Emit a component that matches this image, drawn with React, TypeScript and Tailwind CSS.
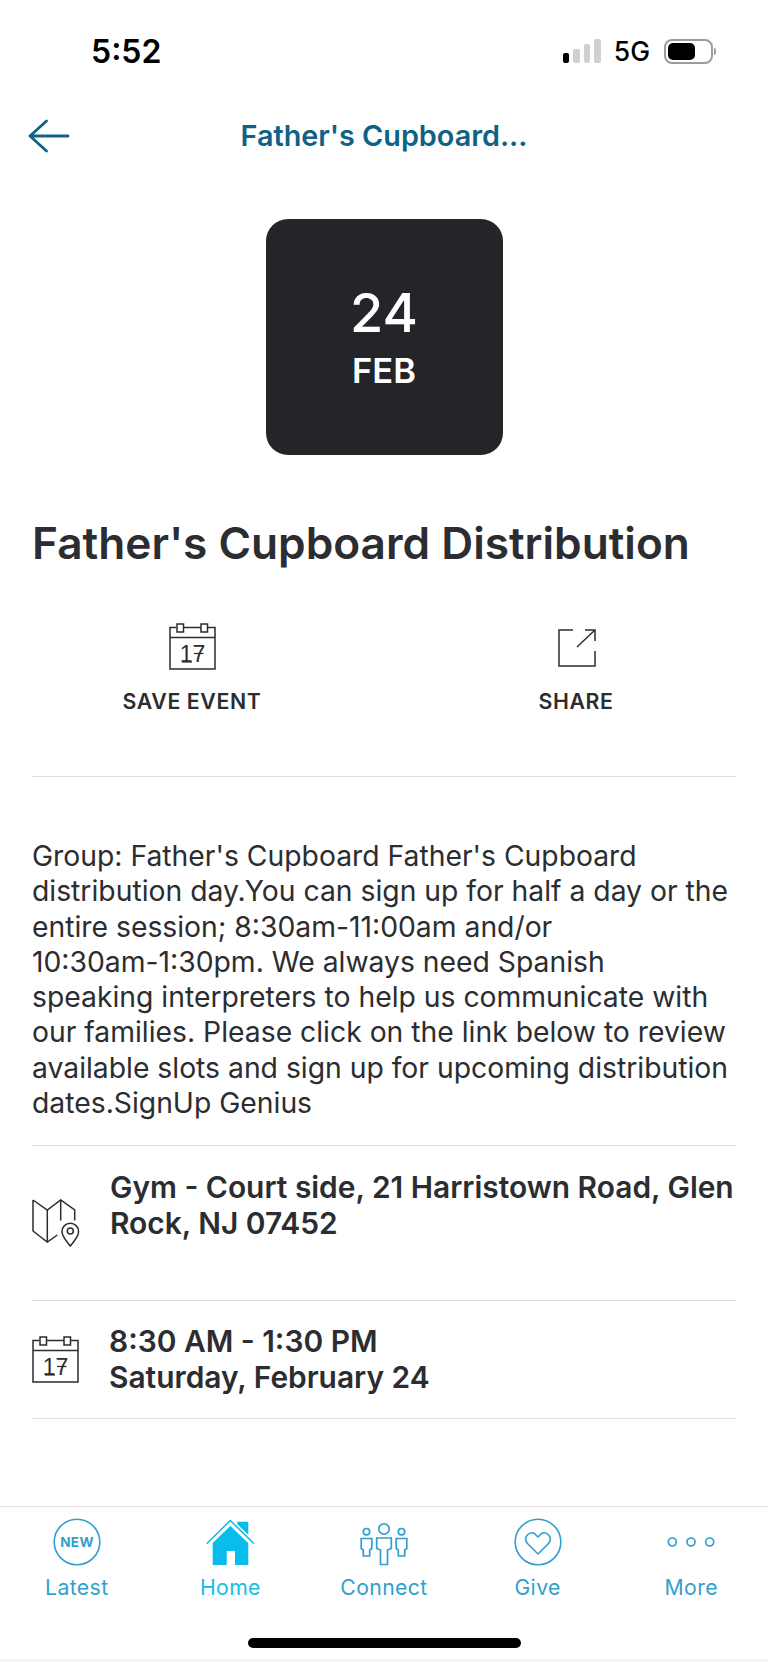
import React from "react";

const ink = "#2b2d30";

function CalendarIcon() {
  return (
    <svg width="47" height="47" viewBox="0 0 47 47" fill="none" stroke={ink} strokeWidth="1.5" className="block shrink-0">
      <path d="M7.500 4.500H1v41.500h45V4.500h-7M15 4.500h17M1 14.500h45" />
      <rect x="8" y="1" width="6.500" height="8" />
      <rect x="32" y="1" width="6.500" height="8" />
      <text x="23.500" y="39" textAnchor="middle" fontSize="23" fontFamily="'Liberation Sans', sans-serif" fill={ink} stroke="none">17</text>
      <path d="M25 30.500h9.500" strokeWidth="1.2" />
      <path d="M13 39h10" strokeWidth="1.2" />
    </svg>
  );
}

function ShareIcon() {
  return (
    <svg width="38" height="38" viewBox="0 0 38 38" fill="none" stroke={ink} strokeWidth="1.5" className="block">
      <path d="M15 1H1v36h36V22" />
      <path d="M19 18 37 1M27 1h10v11" />
    </svg>
  );
}

function MapIcon() {
  return (
    <svg width="48" height="48" viewBox="0 0 48 48" fill="none" stroke={ink} strokeWidth="1.5" className="block shrink-0">
      <path d="M1 1v31l14.300 11 10-7M1 1l14.300 10L28.700 1l14 10v10.500" />
      <path d="M15.300 11v32M28.700 1v20.500" />
      <path d="M38.300 47c-3-4-8.300-9-8.300-14.500a8.300 8.300 0 0 1 16.600 0c0 5.500-5.300 10.500-8.300 14.500z" />
      <circle cx="38.300" cy="32" r="3" />
    </svg>
  );
}

function NewIcon() {
  return (
    <svg width="48" height="48" viewBox="0 0 48 48" fill="none" className="block">
      <circle cx="24" cy="24" r="22.800" stroke="#329fcf" strokeWidth="1.6" />
      <text x="24" y="29" textAnchor="middle" fontSize="13.500" fontWeight="700" fontFamily="Inter, sans-serif" letterSpacing="0.4" fill="#329fcf">NEW</text>
    </svg>
  );
}

function HomeIcon() {
  return (
    <svg width="48" height="48" viewBox="0 0 48 48" className="block">
      <path d="M6.700 25 24.300 8l18 17v22H29V33h-8.300v14h-14z" fill="#08bde9" />
      <path d="M31.300 3.700h11v13l-11-10z" fill="#08bde9" />
      <path d="M.700 25.700 24.300 2.800 48 25.700" fill="none" stroke="#fff" strokeWidth="4.500" />
      <path d="M.700 25.700 24.300 2.500 48 25.700" fill="none" stroke="#08bde9" strokeWidth="1.500" />
    </svg>
  );
}

function ConnectIcon() {
  return (
    <svg width="48" height="48" viewBox="0 0 48 48" fill="none" stroke="#329fcf" strokeWidth="1.700" className="block">
      <circle cx="24" cy="11" r="5.200" />
      <path d="M16.700 20H31.300V30.500L27.500 32V46.500H20.500V32L16.700 30.500z" />
      <circle cx="6.500" cy="13.700" r="3.200" />
      <path d="M1.200 20.500H11.800V30.500L9.700 32V38H3.300V32L1.200 30.500z" />
      <circle cx="41.500" cy="13.700" r="3.200" />
      <path d="M36.200 20.500H46.800V30.500L44.700 32V38H38.300V32L36.200 30.500z" />
    </svg>
  );
}

function GiveIcon() {
  return (
    <svg width="48" height="48" viewBox="0 0 48 48" fill="none" stroke="#329fcf" strokeWidth="1.6" className="block">
      <circle cx="24" cy="24" r="22.800" />
      <path d="M24 36 13.500 25.500c-5-6 2-13.500 7.500-9.500l3 3 3-3c5.500-4 12.500 3.500 7.500 9.500z" strokeLinejoin="round" />
    </svg>
  );
}

function MoreIcon() {
  return (
    <svg width="48" height="48" viewBox="0 0 48 48" fill="none" stroke="#329fcf" strokeWidth="1.7" className="block">
      <circle cx="5.300" cy="24" r="4" />
      <circle cx="24" cy="24" r="4" />
      <circle cx="42.700" cy="24" r="4" />
    </svg>
  );
}

function NavItem({ icon, label, active }: { icon: React.ReactNode; label: string; active?: boolean }) {
  return (
    <div className="flex flex-col items-center">
      {icon}
      <span className={`mt-[5px] text-[21.200px] leading-[32px] tracking-[0.4px] ${active ? "text-[#15bde9]" : "text-[#329fcf]"}`}>{label}</span>
    </div>
  );
}

export default function App() {
  return (
    <div className="flex h-[1662px] w-[768px] flex-col overflow-hidden bg-white font-['Inter',sans-serif] text-[#2b2d30]">
      <div className="flex h-[102px] shrink-0 items-center justify-between pl-[91px] pr-[52px]">
        <span className="pt-[2px] text-[32px] font-semibold text-black">5:52</span>
        <div className="flex items-center">
          <div className="flex items-end gap-[4px]">
            <span className="h-[10px] w-[6.500px] rounded-[2px] bg-black" />
            <span className="h-[14px] w-[6.500px] rounded-[2px] bg-[#d0d0d0]" />
            <span className="h-[19px] w-[6.500px] rounded-[2px] bg-[#d0d0d0]" />
            <span className="h-[24px] w-[6.500px] rounded-[2px] bg-[#d0d0d0]" />
          </div>
          <span className="ml-[13px] text-[26.500px] font-medium leading-[32px] text-black">5G</span>
          <div className="ml-[14px] flex h-[25px] w-[49px] items-center rounded-[8px] border-2 border-[#9c9c9c] p-[2px]">
            <div className="h-full w-[27px] rounded-[5px] bg-black" />
          </div>
          <div className="ml-[1px] h-[7px] w-[2px] rounded-r-full bg-[#9c9c9c]" />
        </div>
      </div>

      <div className="relative flex h-[66px] shrink-0 items-center justify-center">
        <svg width="42" height="34" viewBox="0 0 42 34" fill="none" stroke="#0f6285" strokeWidth="2.800" strokeLinecap="round" strokeLinejoin="round" className="absolute left-[28px] top-[17px]">
          <path d="M40 17H2M18.500 2 2 17l16.500 15" />
        </svg>
        <span className="pt-[1px] text-[28.800px] font-semibold text-[#0f6285]">Father's Cupboard...</span>
      </div>

      <div className="mt-[51px] flex h-[236px] w-[237px] shrink-0 flex-col items-center justify-center self-center rounded-[22px] bg-[#232528] pt-[2px] text-white">
        <span className="text-[54px] font-medium leading-[60px]">24</span>
        <span className="mt-[6px] text-[34.500px] font-semibold leading-[44px]">FEB</span>
      </div>

      <h1 className="mx-[32px] mt-[60px] text-[44.200px] font-semibold leading-[56px]">Father's Cupboard Distribution</h1>

      <div className="mt-[52px] flex shrink-0">
        <div className="flex w-[384px] flex-col items-center">
          <div className="h-[47px]"><CalendarIcon /></div>
          <span className="mt-[18px] text-[21.300px] font-semibold leading-[26px] tracking-[0.6px]">SAVE EVENT</span>
        </div>
        <div className="flex w-[384px] flex-col items-center">
          <div className="ml-[1px] h-[47px] pt-[6px]"><ShareIcon /></div>
          <span className="mt-[18px] text-[21.300px] font-semibold leading-[26px] tracking-[0.6px]">SHARE</span>
        </div>
      </div>

      <div className="mx-[32px] mt-[62px] border-t border-[#dfdfdf]" />

      <p className="mx-[32px] mt-[62px] text-[28.300px] leading-[35.250px]">
        Group: Father's Cupboard Father's Cupboard<br />
        distribution day.You can sign up for half a day or the<br />
        entire session; 8:30am-11:00am and/or<br />
        10:30am-1:30pm. We always need Spanish<br />
        speaking interpreters to help us communicate with<br />
        our families. Please click on the link below to review<br />
        available slots and sign up for upcoming distribution<br />
        dates.SignUp Genius
      </p>

      <div className="mx-[32px] mt-[24px] border-t border-[#dfdfdf]" />

      <div className="mx-[32px] flex h-[154px] gap-[30px] pt-[23px]">
        <div className="mt-[30px]"><MapIcon /></div>
        <p className="text-[29.900px] font-semibold leading-[36px]">Gym - Court side, 21 Harristown Road, Glen Rock, NJ 07452</p>
      </div>

      <div className="mx-[32px] border-t border-[#dfdfdf]" />

      <div className="mx-[32px] flex h-[117px] gap-[30px] pt-[22px]">
        <div className="mt-[13px]"><CalendarIcon /></div>
        <p className="text-[29.900px] font-semibold leading-[36px]">8:30 AM - 1:30 PM<br />Saturday, February 24</p>
      </div>

      <div className="mx-[32px] border-t border-[#dfdfdf]" />

      <div className="mt-[87px] grid shrink-0 grid-cols-5 border-t border-[#e4e4e4] pt-[11px]">
        <NavItem icon={<NewIcon />} label="Latest" />
        <NavItem icon={<HomeIcon />} label="Home" active />
        <NavItem icon={<ConnectIcon />} label="Connect" />
        <NavItem icon={<GiveIcon />} label="Give" />
        <NavItem icon={<MoreIcon />} label="More" />
      </div>

      <div className="mt-[35px] h-[10px] w-[273px] shrink-0 self-center rounded-full bg-black" />
      <div className="mt-auto h-[3px] shrink-0 bg-[#f5f5f5]" />
    </div>
  );
}
